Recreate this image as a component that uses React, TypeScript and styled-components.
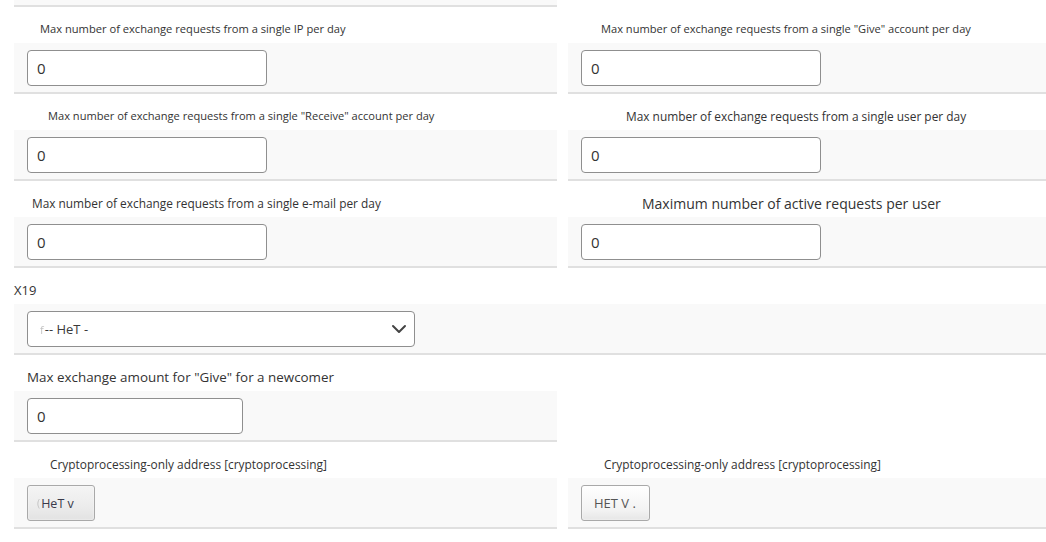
import React from 'react';
import styled, { createGlobalStyle } from 'styled-components';

const GlobalStyle = createGlobalStyle`
  html, body {
    margin: 0;
    padding: 0;
    background: #ffffff;
  }
  body {
    font-family: "Open Sans", "Noto Sans", "DejaVu Sans", sans-serif;
    color: #333333;
  }
`;

const Page = styled.div`
  width: 1046px;
  height: 542px;
  padding-left: 14px;
  box-sizing: border-box;
  overflow: hidden;
  display: grid;
  grid-template-columns: 543px 1fr;
  column-gap: 11px;
  align-content: start;
`;

const TopEdge = styled.div`
  height: 5px;
  background: #f9f9f9;
  border-bottom: 2px solid #e0e0e0;
`;

const Field = styled.div<{ $wide?: boolean }>`
  display: flex;
  flex-direction: column;
  border-bottom: 2px solid #e0e0e0;
  grid-column: ${(p) => (p.$wide ? '1 / -1' : 'auto')};
  margin-right: ${(p) => (p.$wide ? '-14px' : '0')};
`;

const Label = styled.div<{ $indent: number; $size: number }>`
  height: 36px;
  box-sizing: border-box;
  padding-top: 14px;
  padding-left: ${(p) => p.$indent}px;
  font-size: ${(p) => p.$size}px;
  line-height: ${(p) => (p.$size > 12.5 ? 17 : 16)}px;
  color: #333333;
  white-space: nowrap;
`;

const Band = styled.div`
  background: #f9f9f9;
  padding: 7px 13px 6px;
  display: flex;
  align-items: center;
`;

const TextInput = styled.div<{ $width: number }>`
  width: ${(p) => p.$width}px;
  height: 36px;
  box-sizing: border-box;
  background: #ffffff;
  border: 1px solid #8f8f8f;
  border-radius: 4px;
  padding-left: 9px;
  display: flex;
  align-items: center;
  font-size: 15px;
  color: #333333;
`;

const Select = styled.div`
  width: 388px;
  height: 36px;
  box-sizing: border-box;
  background: #ffffff;
  border: 1px solid #8f8f8f;
  border-radius: 4px;
  padding: 0 7px 0 12px;
  display: flex;
  align-items: center;
  justify-content: space-between;
  font-size: 13px;
  color: #3a3a3a;
`;

const Ghost = styled.span`
  display: inline-block;
  color: #c4c4c4;
  font-size: 0.85em;
  filter: blur(0.5px);
  margin-right: 1px;
`;

const ToggleButton = styled.div<{ $light?: boolean }>`
  width: ${(p) => (p.$light ? 69 : 68)}px;
  height: 36px;
  box-sizing: border-box;
  border: 1px solid #a9a9a9;
  border-radius: 3px;
  background: ${(p) =>
    p.$light
      ? 'linear-gradient(#ffffff, #f3f3f3 70%, #e6e6e6)'
      : 'linear-gradient(#f4f4f4, #ececec 60%, #e2e2e2)'};
  box-shadow: inset 0 0 2px rgba(255, 255, 255, 0.9);
  display: flex;
  align-items: center;
  padding-left: ${(p) => (p.$light ? 12 : 9)}px;
  font-size: ${(p) => (p.$light ? 13 : 12.5)}px;
  color: ${(p) => (p.$light ? '#555555' : '#3a3a4a')};
  white-space: nowrap;
`;

const Empty = styled.div``;

const Chevron = () => (
  <svg width="16" height="10" viewBox="0 0 16 10" fill="none">
    <path d="M2 2l6 6 6-6" stroke="#444" strokeWidth="2" strokeLinecap="round" strokeLinejoin="round" />
  </svg>
);

type NumField = { label: string; indent: number; size: number };

const rows: [NumField, NumField][] = [
  [
    { label: 'Max number of exchange requests from a single IP per day', indent: 26, size: 11.15 },
    { label: 'Max number of exchange requests from a single "Give" account per day', indent: 33, size: 11.1 },
  ],
  [
    { label: 'Max number of exchange requests from a single "Receive" account per day', indent: 34, size: 11.1 },
    { label: 'Max number of exchange requests from a single user per day', indent: 58, size: 11.9 },
  ],
  [
    { label: 'Max number of exchange requests from a single e-mail per day', indent: 18, size: 11.87 },
    { label: 'Maximum number of active requests per user', indent: 74, size: 14 },
  ],
];

const NumberField: React.FC<NumField & { width?: number }> = ({ label, indent, size, width = 240 }) => (
  <Field>
    <Label $indent={indent} $size={size}>{label}</Label>
    <Band>
      <TextInput $width={width}>0</TextInput>
    </Band>
  </Field>
);

const App: React.FC = () => (
  <>
    <GlobalStyle />
    <Page>
      <TopEdge />
      <Empty />
      {rows.map(([left, right]) => (
        <React.Fragment key={left.label}>
          <NumberField {...left} />
          <NumberField {...right} />
        </React.Fragment>
      ))}

      <Field $wide>
        <Label $indent={0} $size={13}>X19</Label>
        <Band>
          <Select>
            <span>
              <Ghost>f</Ghost>-- HeT -
            </span>
            <Chevron />
          </Select>
        </Band>
      </Field>

      <NumberField label={'Max exchange amount for "Give" for a newcomer'} indent={13} size={13.4} width={216} />
      <Empty />

      <Field>
        <Label $indent={36} $size={11.9}>Cryptoprocessing-only address [cryptoprocessing]</Label>
        <Band>
          <ToggleButton>
            <Ghost>(</Ghost>HeT v
          </ToggleButton>
        </Band>
      </Field>
      <Field>
        <Label $indent={36} $size={11.9}>Cryptoprocessing-only address [cryptoprocessing]</Label>
        <Band>
          <ToggleButton $light>HET V .</ToggleButton>
        </Band>
      </Field>
    </Page>
  </>
);

export default App;
